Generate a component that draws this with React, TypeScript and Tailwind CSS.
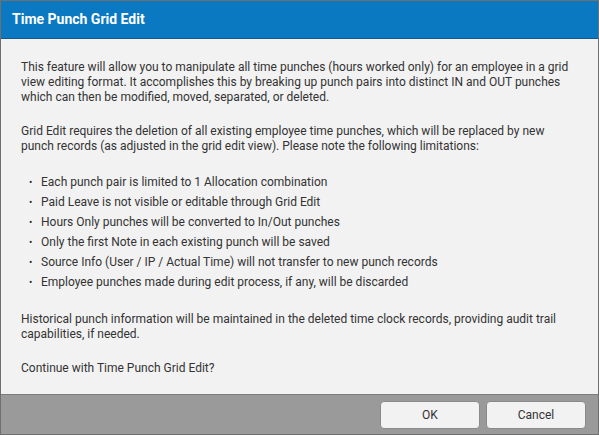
import React from "react";

const LIMITS = [
  "Each punch pair is limited to 1 Allocation combination",
  "Paid Leave is not visible or editable through Grid Edit",
  "Hours Only punches will be converted to In/Out punches",
  "Only the first Note in each existing punch will be saved",
  "Source Info (User / IP / Actual Time) will not transfer to new punch records",
  "Employee punches made during edit process, if any, will be discarded",
];

export default function App() {
  return (
    <div
      className="w-[599px] h-[435px] flex flex-col border border-[#6f6f6f] bg-[#f2f2f2] text-[#333333] overflow-hidden"
      style={{ fontFamily: "Roboto, 'Liberation Sans', sans-serif" }}
    >
      <div className="h-[38px] shrink-0 flex items-center px-[11px] bg-[#0a79c2] border-b border-[#155a8a]">
        <h1 className="text-[14px] font-bold text-white">Time Punch Grid Edit</h1>
      </div>

      <div className="flex-1 pl-[20px] pr-[26px] pt-[21px] text-[12px] leading-[15px]">
        <p>
          This feature will allow you to manipulate all time punches (hours worked only) for an employee in a grid
          view editing format. It accomplishes this by breaking up punch pairs into distinct IN and OUT punches
          which can then be modified, moved, separated, or deleted.
        </p>
        <p className="mt-[19px]">
          Grid Edit requires the deletion of all existing employee time punches, which will be replaced by new punch
          records (as adjusted in the grid edit view). Please note the following limitations:
        </p>
        <ul className="mt-[21px] flex flex-col gap-[5px]">
          {LIMITS.map((item) => (
            <li key={item} className="flex items-center">
              <span className="w-[20px] pl-[8px] text-[10px]">•</span>
              <span>{item}</span>
            </li>
          ))}
        </ul>
        <p className="mt-[22px]">
          Historical punch information will be maintained in the deleted time clock records, providing audit trail
          capabilities, if needed.
        </p>
        <p className="mt-[19px]">Continue with Time Punch Grid Edit?</p>
      </div>

      <div className="h-[40px] shrink-0 flex items-center justify-end gap-[6px] pr-[12px] bg-[#9a9a9a] border-t border-[#7d7d7d]">
        <button className="w-[100px] h-[28px] rounded-[4px] bg-[#f2f2f2] border border-[#8a8a8a] text-[12px] text-[#333]">
          OK
        </button>
        <button className="w-[100px] h-[28px] rounded-[4px] bg-[#f2f2f2] border border-[#8a8a8a] text-[12px] text-[#333]">
          Cancel
        </button>
      </div>
    </div>
  );
}
